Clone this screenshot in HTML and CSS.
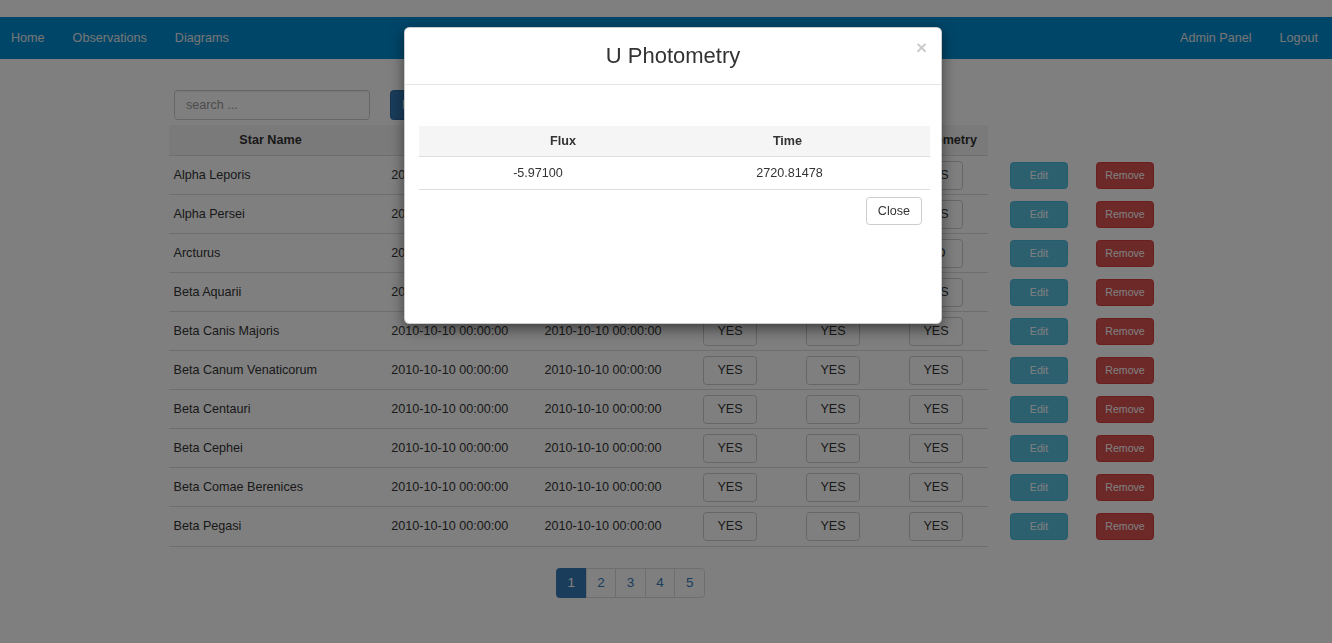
FILE: index.html
```html
<!DOCTYPE html>
<html lang="en">
<head>
<meta charset="utf-8">
<title>Stars</title>
<link rel="stylesheet" href="styles.css">
</head>
<body>
<div class="page">
  <nav class="navbar">
    <ul class="nav nav-left">
      <li><a href="#">Home</a></li>
      <li><a href="#">Observations</a></li>
      <li><a href="#">Diagrams</a></li>
    </ul>
    <ul class="nav nav-right">
      <li><a href="#">Admin Panel</a></li>
      <li><a href="#">Logout</a></li>
    </ul>
  </nav>

  <main class="container">
    <div class="toolbar">
      <input class="search" type="text" placeholder="search ...">
      <button class="btn btn-primary">New Star</button>
    </div>

    <table class="stars">
      <thead>
        <tr>
          <th class="c1">Star Name</th>
          <th class="c2">Start Date</th>
          <th class="c3">End Date</th>
          <th class="c4">U Photometry</th>
          <th class="c5">B Photometry</th>
          <th class="c6">V Photometry</th>
          <th class="c7 act"></th>
          <th class="c8 act"></th>
        </tr>
      </thead>
      <tbody>
        <tr><td class="name">Alpha Leporis</td><td>2010-10-10 00:00:00</td><td>2010-10-10 00:00:00</td><td><button class="btn yes">YES</button></td><td><button class="btn yes">YES</button></td><td><button class="btn yes">YES</button></td><td class="act"><button class="btn btn-info">Edit</button></td><td class="act"><button class="btn btn-danger">Remove</button></td></tr>
        <tr><td class="name">Alpha Persei</td><td>2010-10-10 00:00:00</td><td>2010-10-10 00:00:00</td><td><button class="btn yes">YES</button></td><td><button class="btn yes">YES</button></td><td><button class="btn yes">YES</button></td><td class="act"><button class="btn btn-info">Edit</button></td><td class="act"><button class="btn btn-danger">Remove</button></td></tr>
        <tr><td class="name">Arcturus</td><td>2010-10-10 00:00:00</td><td>2010-10-10 00:00:00</td><td><button class="btn yes">YES</button></td><td><button class="btn yes">YES</button></td><td><button class="btn yes">NO</button></td><td class="act"><button class="btn btn-info">Edit</button></td><td class="act"><button class="btn btn-danger">Remove</button></td></tr>
        <tr><td class="name">Beta Aquarii</td><td>2010-10-10 00:00:00</td><td>2010-10-10 00:00:00</td><td><button class="btn yes">YES</button></td><td><button class="btn yes">YES</button></td><td><button class="btn yes">YES</button></td><td class="act"><button class="btn btn-info">Edit</button></td><td class="act"><button class="btn btn-danger">Remove</button></td></tr>
        <tr><td class="name">Beta Canis Majoris</td><td>2010-10-10 00:00:00</td><td>2010-10-10 00:00:00</td><td><button class="btn yes">YES</button></td><td><button class="btn yes">YES</button></td><td><button class="btn yes">YES</button></td><td class="act"><button class="btn btn-info">Edit</button></td><td class="act"><button class="btn btn-danger">Remove</button></td></tr>
        <tr><td class="name">Beta Canum Venaticorum</td><td>2010-10-10 00:00:00</td><td>2010-10-10 00:00:00</td><td><button class="btn yes">YES</button></td><td><button class="btn yes">YES</button></td><td><button class="btn yes">YES</button></td><td class="act"><button class="btn btn-info">Edit</button></td><td class="act"><button class="btn btn-danger">Remove</button></td></tr>
        <tr><td class="name">Beta Centauri</td><td>2010-10-10 00:00:00</td><td>2010-10-10 00:00:00</td><td><button class="btn yes">YES</button></td><td><button class="btn yes">YES</button></td><td><button class="btn yes">YES</button></td><td class="act"><button class="btn btn-info">Edit</button></td><td class="act"><button class="btn btn-danger">Remove</button></td></tr>
        <tr><td class="name">Beta Cephei</td><td>2010-10-10 00:00:00</td><td>2010-10-10 00:00:00</td><td><button class="btn yes">YES</button></td><td><button class="btn yes">YES</button></td><td><button class="btn yes">YES</button></td><td class="act"><button class="btn btn-info">Edit</button></td><td class="act"><button class="btn btn-danger">Remove</button></td></tr>
        <tr><td class="name">Beta Comae Berenices</td><td>2010-10-10 00:00:00</td><td>2010-10-10 00:00:00</td><td><button class="btn yes">YES</button></td><td><button class="btn yes">YES</button></td><td><button class="btn yes">YES</button></td><td class="act"><button class="btn btn-info">Edit</button></td><td class="act"><button class="btn btn-danger">Remove</button></td></tr>
        <tr class="last"><td class="name">Beta Pegasi</td><td>2010-10-10 00:00:00</td><td>2010-10-10 00:00:00</td><td><button class="btn yes">YES</button></td><td><button class="btn yes">YES</button></td><td><button class="btn yes">YES</button></td><td class="act"><button class="btn btn-info">Edit</button></td><td class="act"><button class="btn btn-danger">Remove</button></td></tr>
      </tbody>
    </table>

    <ul class="pagination">
      <li class="active"><a href="#">1</a></li>
      <li><a href="#">2</a></li>
      <li><a href="#">3</a></li>
      <li><a href="#">4</a></li>
      <li><a href="#">5</a></li>
    </ul>
  </main>
</div>

<div class="backdrop"></div>

<div class="modal">
  <div class="modal-header">
    <span class="spacer"></span>
    <h4 class="modal-title">U Photometry</h4>
    <button class="close" type="button">&times;</button>
  </div>
  <div class="modal-body">
    <table class="phot">
      <thead>
        <tr><th class="p1">Flux</th><th class="p2">Time</th></tr>
      </thead>
      <tbody>
        <tr><td class="p1">-5.97100</td><td class="p2">2720.81478</td></tr>
      </tbody>
    </table>
    <div class="modal-actions">
      <button class="btn btn-default">Close</button>
    </div>
  </div>
</div>
</body>
</html>
```

FILE: styles.css
```css
* { box-sizing: border-box; }

html, body {
  margin: 0;
  padding: 0;
  background: #fff;
}

body {
  font-family: "Liberation Sans", Arial, Helvetica, sans-serif;
  font-size: 12.6px;
  line-height: 18px;
  color: #333;
}

.page {
  padding-top: 17px;
  min-height: 643px;
}

/* navbar */
.navbar {
  display: flex;
  justify-content: space-between;
  height: 42px;
  background: #008dd2;
}

.nav {
  list-style: none;
  margin: 0;
  padding: 0;
  display: flex;
}

.nav-left { margin-left: -3px; }

.nav a {
  display: block;
  line-height: 42px;
  padding: 0 14px;
  color: #ececec;
  text-decoration: none;
}

/* main */
.container {
  margin-left: 169px;
  padding-top: 31px;
}

.toolbar {
  display: flex;
  gap: 20px;
  padding-left: 5px;
  height: 30px;
}

.search {
  width: 196px;
  height: 30px;
  padding: 0 11px;
  border: 1px solid #ccc;
  border-radius: 3.6px;
  font-family: inherit;
  font-size: 12.6px;
  color: #555;
  box-shadow: inset 0 1px 1px rgba(0,0,0,.075);
}
.search::placeholder { color: #999; }

.btn {
  font-family: inherit;
  font-size: 12.6px;
  border: 1px solid transparent;
  border-radius: 3.6px;
  cursor: pointer;
  padding: 0;
}

.btn-primary {
  height: 30px;
  padding: 0 11px;
  background: #337ab7;
  border-color: #2e6da4;
  color: #fff;
}

/* stars table */
.stars {
  margin-top: 5px;
  border-collapse: separate;
  border-spacing: 0;
  table-layout: fixed;
  width: 990.5px;
}

.stars th {
  height: 30px;
  padding: 0 5px;
  background: #f5f5f5;
  font-weight: bold;
  text-align: center;
  vertical-align: middle;
}
.stars th.act { background: transparent; }

.c1 { width: 203px; }
.c2 { width: 155.5px; }
.c3 { width: 151px; }
.c4, .c5, .c6, .c7 { width: 103px; }
.c8 { width: 69px; }

.stars td {
  padding: 4px;
  border-top: 1px solid #ddd;
  text-align: center;
  vertical-align: middle;
  white-space: nowrap;
  height: 39px;
}
.stars td.name { text-align: left; padding-left: 4.5px; }
.stars td.act { border-top-color: transparent; }
.stars tr.last td { border-bottom: 1px solid #ddd; height: 41px; padding-bottom: 5px; }
.stars tr.last td.act { border-bottom-color: transparent; }

.yes {
  width: 54px;
  height: 29px;
  background: #fff;
  border-color: #ccc;
  color: #333;
}

.btn-info, .btn-danger {
  width: 58px;
  height: 27px;
  font-size: 10.6px;
  color: #fff;
}
.btn-info { background: #5bc0de; border-color: #46b8da; }
.btn-danger { background: #d9534f; border-color: #d43f3a; }

/* pagination */
.pagination {
  list-style: none;
  display: flex;
  margin: 21px 0 0 387px;
  padding: 0;
}
.pagination li + li { margin-left: -1px; }
.pagination a {
  display: block;
  width: 30.6px;
  height: 30px;
  line-height: 28px;
  text-align: center;
  border: 1px solid #ddd;
  color: #337ab7;
  text-decoration: none;
  font-size: 13.5px;
  background: #fff;
}
.pagination li:first-child a { border-radius: 3.6px 0 0 3.6px; }
.pagination li:last-child a { border-radius: 0 3.6px 3.6px 0; }
.pagination .active a {
  background: #337ab7;
  border-color: #337ab7;
  color: #fff;
}

/* modal */
.backdrop {
  position: fixed;
  inset: 0;
  background: rgba(0,0,0,.5);
}

.modal {
  position: absolute;
  top: 27px;
  left: 404px;
  width: 538px;
  background: #fff;
  border: 1px solid rgba(0,0,0,.2);
  border-radius: 5.4px;
  box-shadow: 0 4.5px 13.5px rgba(0,0,0,.5);
}

.modal-header {
  display: grid;
  grid-template-columns: 1fr auto 1fr;
  padding: 13.5px 14px 14.5px;
  border-bottom: 1px solid #e5e5e5;
}

.modal-title {
  margin: 0;
  font-size: 22px;
  line-height: 28px;
  font-weight: normal;
  color: #333;
  text-align: center;
}

.close {
  justify-self: end;
  align-self: start;
  margin-top: -4px;
  padding: 0;
  border: 0;
  background: transparent;
  font-family: inherit;
  font-size: 19px;
  font-weight: bold;
  line-height: 1;
  color: #000;
  opacity: .2;
  cursor: pointer;
}

.modal-body {
  padding: 41px 13px 98px 14px;
}

.phot {
  width: 511px;
  border-collapse: separate;
  border-spacing: 0;
  table-layout: fixed;
}
.phot .p1 { width: 238px; }
.phot .p2 { width: 273px; }

.phot th {
  height: 31px;
  padding: 0;
  background: #f5f5f5;
  border-bottom: 1px solid #ddd;
  font-weight: bold;
  text-align: center;
  vertical-align: middle;
}
.phot th.p1 { padding-left: 50px; }
.phot th.p2 { padding-right: 12px; }

.phot td {
  height: 33px;
  padding: 0;
  border-bottom: 1px solid #ddd;
  text-align: center;
  vertical-align: middle;
}
.phot td.p2 { padding-right: 8px; }

.modal-actions {
  display: flex;
  justify-content: flex-end;
  padding-right: 6px;
  margin-top: 7px;
}

.btn-default {
  height: 28px;
  padding: 0 11px;
  background: #fff;
  border-color: #ccc;
  color: #333;
}
```
